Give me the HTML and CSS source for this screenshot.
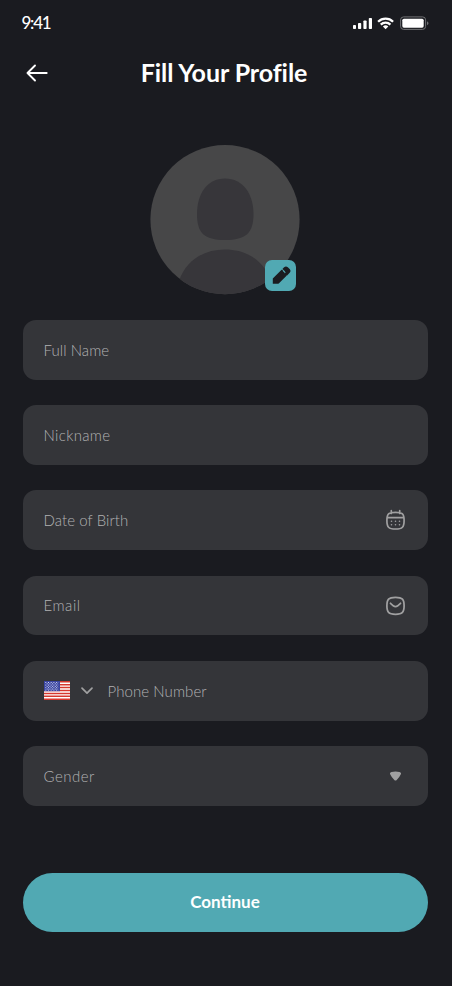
FILE: index.html
```html
<!DOCTYPE html>
<html lang="en">
<head>
<meta charset="utf-8">
<meta name="viewport" content="width=device-width, initial-scale=1">
<title>Fill Your Profile</title>
<link rel="stylesheet" href="styles.css">
</head>
<body>
<main class="screen">
  <div class="status-bar">
    <span class="time">9:41</span>
    <svg class="status-icons" width="78" height="16" viewBox="0 0 78 16" aria-hidden="true">
      <g fill="#fff">
        <rect x="1" y="10" width="3" height="4" rx=".8"/>
        <rect x="6" y="8" width="3.2" height="6" rx=".8"/>
        <rect x="11.4" y="5.5" width="3.2" height="8.5" rx=".8"/>
        <rect x="16.8" y="3" width="3.2" height="11" rx=".8"/>
      </g>
      <g fill="none" stroke="#fff" stroke-width="2.3">
        <path d="M26.1 6.7a10.7 10.7 0 0 1 15 0"/>
        <path d="M28.8 9.6a6.8 6.8 0 0 1 9.6 0"/>
      </g>
      <path fill="#fff" d="M33.6 14.2 30.9 11.4a4 4 0 0 1 5.4 0Z"/>
      <rect x="48.6" y="1.9" width="25" height="12.5" rx="3" fill="none" stroke="#707174"/>
      <rect x="50.3" y="3.7" width="21.4" height="9" rx="1.6" fill="#fff"/>
      <path d="M75 6.2c2 1 2 3 0 4z" fill="#707174"/>
    </svg>
  </div>
  <header class="header">
    <svg class="back" width="22" height="18" viewBox="0 0 22 18" role="img" aria-label="Back"><path d="M20.7 9H1.5M9 1.5 1.5 9 9 16.5" fill="none" stroke="#fff" stroke-width="1.9" stroke-linecap="round" stroke-linejoin="round"/></svg>
    <h1 class="title">Fill Your Profile</h1>
  </header>
  <div class="avatar">
    <svg class="portrait" width="150" height="150" viewBox="0 0 150 150" aria-hidden="true">
      <defs><clipPath id="disc"><circle cx="75" cy="74.6" r="74.6"/></clipPath></defs>
      <circle cx="75" cy="74.6" r="74.6" fill="#474748"/>
      <g fill="#37363a" clip-path="url(#disc)">
        <path d="M75 33.4C57 33.4 47 49 47 69C47 88 54 95 75 95C96 95 103.5 88 103.5 69C103.5 49 93 33.4 75 33.4Z"/>
        <path d="M29 136C36 115 54 104.5 75 104.5S114 115 121 136V150H29Z"/>
      </g>
    </svg>
    <span class="edit">
      <svg width="31" height="31" viewBox="0 0 31 31" aria-hidden="true"><path fill="#1b1c20" d="M7.8 23.8V18.6L16.6 9.8Q17.5 9.6 17.8 10.4Q17.9 11.7 19.1 12.2Q20.3 13 19.4 13.8L21.8 15.5L14 23.3Q13.4 23.8 12.7 23.8Z M17.4 8.9 19.1 7.2Q21 5.6 22.8 7.2L24.9 9.3Q26.3 10.9 24.9 12.6L22.1 15.4 19.2 13.9 20.6 12.4 19.6 11Z"/></svg>
    </span>
  </div>
  <form class="form">
    <div class="field"><span class="label name">Full Name</span></div>
    <div class="field"><span class="label nick">Nickname</span></div>
    <div class="field"><span class="label birth">Date of Birth</span>
      <svg class="trailing" width="22" height="22" viewBox=".5 0 22 22" aria-hidden="true">
        <path d="M11 3.4C4 3.4 2.4 4.9 2.4 11.5S4 20 11 20s8.6-1.9 8.6-8.5S18 3.4 11 3.4ZM2.6 8.6H19.4M6.8 1.7V4.5M15.2 1.7V4.5" fill="none" stroke="#a0a0a1" stroke-width="1.7" stroke-linecap="round"/>
        <path d="M7 12.2h.01M11 12.2h.01M15 12.2h.01M7 15.7h.01M11 15.7h.01M15 15.7h.01" stroke="#a0a0a1" stroke-width="1.6" stroke-linecap="round"/>
      </svg>
    </div>
    <div class="field"><span class="label email">Email</span>
      <svg class="trailing" width="22" height="22" viewBox=".5 0 22 22" aria-hidden="true"><path d="M11 2.3C4 2.3 2.4 4.4 2.4 10.8S4 19.3 11 19.3s8.6-2.1 8.6-8.5S18 2.3 11 2.3ZM6 8.3 8.8 10.8Q11 12.6 13.2 10.8L16 8.3" fill="none" stroke="#a0a0a1" stroke-width="1.75" stroke-linecap="round"/></svg>
    </div>
    <div class="field">
      <svg class="flag" width="26" height="19" viewBox="0 0 26 19" aria-hidden="true">
        <path fill="#fff" d="M0 0h26v19H0z"/>
        <path stroke="#d6382e" stroke-width="1.46" d="M0 .73h26M0 3.65h26M0 6.58h26M0 9.5h26M0 12.42h26M0 15.35h26M0 18.27h26"/>
        <path fill="#3a45a0" d="M0 0h16v10.2H0z"/>
        <g stroke="#d0d3ee" stroke-width="1" stroke-dasharray="1 1.7"><path d="M1.3 1.5H15M1.3 4.1H15M1.3 6.7H15M1.3 9.1H15"/><path d="M2.7 2.8H14M2.7 5.4H14M2.7 8H14"/></g>
      </svg>
      <svg class="chevron" width="14" height="10" viewBox="0 0 14 10" aria-hidden="true"><path d="m2 2.2 5 5 5-5" fill="none" stroke="#a0a0a1" stroke-width="1.7" stroke-linecap="round" stroke-linejoin="round"/></svg>
      <span class="label phone">Phone Number</span>
    </div>
    <div class="field"><span class="label gender">Gender</span>
      <svg class="trailing" width="22" height="22" viewBox=".5 0 22 22" aria-hidden="true"><path fill="#a0a0a1" d="M7 6.9Q11 6.2 15 6.9Q17.3 7.6 16.2 9.5Q14.7 12.7 12.2 15.1Q11 16.1 9.8 15.1Q7.3 12.7 5.8 9.5Q4.7 7.6 7 6.9Z"/></svg>
    </div>
  </form>
  <button class="continue" type="button"><span class="continue-text">Continue</span></button>
</main>
</body>
</html>
```
FILE: styles.css
```css
* { box-sizing: border-box; }
body { margin: 0; background: #1a1b20; color: #fff; font-family: Lato, "Liberation Sans", sans-serif; font-variant-ligatures: none; }
.screen { display: flex; flex-direction: column; width: 452px; height: 986px; padding: 0 24.5px 0 22.5px; background: #1a1b20; }
.status-bar { display: flex; align-items: center; justify-content: space-between; height: 46px; }
.time { font-size: 17px; font-weight: 500; line-height: 20px; letter-spacing: -1.25px; margin-left: -1px; }
.status-icons { margin-right: -2.5px; }
.header { display: grid; grid-template-columns: 22px 1fr 22px; align-items: center; height: 54px; padding: 0 3.5px; }
.title { margin: 0; padding: 0 2px 3px 0; text-align: center; font-size: 25px; line-height: 30px; font-weight: 700; letter-spacing: -.07px; white-space: nowrap; }
.avatar { position: relative; align-self: center; width: 150px; height: 150px; margin-top: 45px; }
.portrait { display: block; }
.edit { position: absolute; left: 115px; top: 115px; width: 31px; height: 31px; border-radius: 7px; background: #51a9b3; }
.edit svg { display: block; }
.form { display: grid; gap: 25.65px; margin-top: 25px; }
.field { display: flex; align-items: center; height: 59.6px; padding: 0 21px; border-radius: 13px; background: #343539; }
.label { padding-bottom: .3px; color: #b2b2b3; font-size: 15px; line-height: 20px; font-weight: 300; white-space: nowrap; }
.name { letter-spacing: .08px; }
.nick { letter-spacing: .35px; }
.birth { letter-spacing: .08px; }
.email { letter-spacing: .55px; }
.phone { letter-spacing: .08px; }
.gender { letter-spacing: .5px; }
.trailing { margin-left: auto; }
.chevron { margin: 0 14px 0 10px; }
.continue { height: 59px; margin-top: 67px; border: 0; border-radius: 30px; background: #51a9b3; color: #fff; font: 700 17px/20px Lato, "Liberation Sans", sans-serif; }
```
